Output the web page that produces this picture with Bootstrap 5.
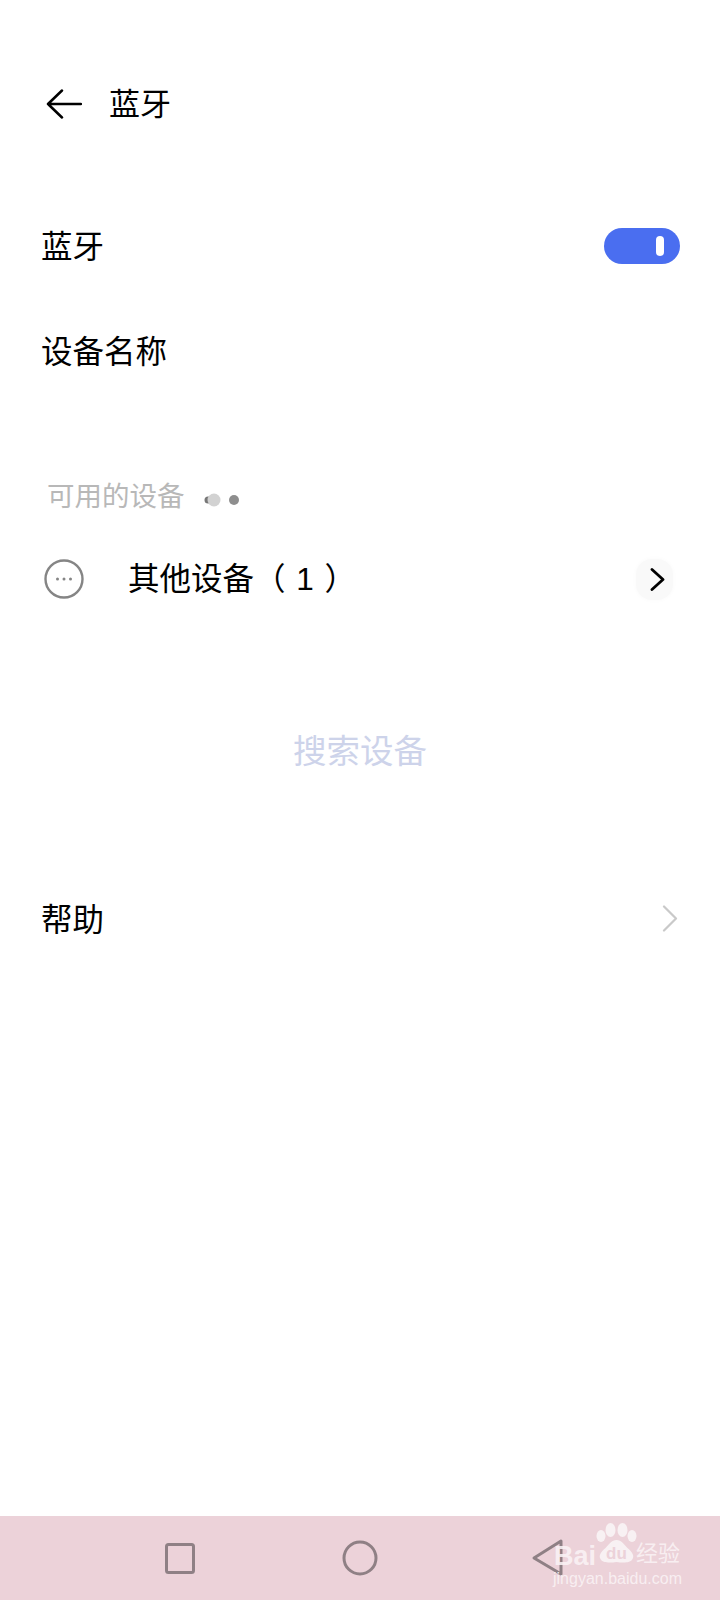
<!DOCTYPE html>
<html lang="zh-CN">
<head>
  <meta charset="UTF-8" />
  <meta name="viewport" content="width=device-width, initial-scale=1.0" />
  <title>蓝牙</title>
  <link href="https://cdn.jsdelivr.net/npm/bootstrap@5.3.0/dist/css/bootstrap.min.css" rel="stylesheet" />
  <style>
    body { font-family: "Liberation Sans", "Noto Sans CJK SC", sans-serif; color: #000; background: #fff; }
    .phone { width: 720px; height: 1600px; overflow: hidden; }
    .top-head { height: 40px; margin-top: 84px; padding-left: 46px; }
    .top-title { font-size: 31px; margin-left: 27px; line-height: 40px; padding-top: 2px; }
    .set-row { height: 105px; padding: 0 40px 0 41px; font-size: 31.5px; }
    .first-row { margin-top: 69px; }
    .txt-low { margin-top: 4px; }
    .txt-mid { margin-top: 4px; }
    .toggle-pill { width: 76px; height: 36px; border-radius: 18px; background: #4a6ef0; padding-right: 16px; }
    .toggle-knob { width: 8px; height: 20px; border-radius: 4px; background: #fff; }
    .sect-label { height: 40px; margin-top: 74px; padding-left: 47px; font-size: 27.5px; color: #b8b8b8; }
    .load-dots { margin-left: 19px; margin-top: 6px; }
    .dev-row { height: 60px; margin-top: 32px; padding: 0 47px 0 44px; font-size: 31.5px; }
    .dev-name { margin-left: 44px; margin-top: 2px; word-spacing: 2px; }
    .more-btn { width: 37px; height: 41px; border-radius: 16px; background: #f9f9f9; box-shadow: 0 0 5px #f9f9f9; padding-left: 5px; }
    .search-txt { height: 60px; margin-top: 110px; font-size: 33.5px; color: #cdd3ea; padding-top: 6px; }
    .help-row { height: 60px; margin-top: 109px; padding: 0 42px 0 41px; font-size: 31.5px; }
    .help-txt { margin-top: 6px; }
    .nav-strip { height: 84px; background: #ecd2d9; }
    .wm { left: 553px; top: 6px; width: 130px; height: 70px; color: rgba(250, 243, 245, .9); }
    .wm-bai { left: 1px; top: 21px; font: bold 27px/26px "Liberation Sans", sans-serif; }
    .wm-cn { left: 83px; top: 20px; font-size: 22px; line-height: 24px; }
    .wm-url { left: 0; top: 47px; font-size: 16px; line-height: 20px; white-space: nowrap; }
  </style>
</head>
<body>
<div class="phone d-flex flex-column">

  <!-- Header -->
  <div class="top-head d-flex align-items-center">
    <svg width="36" height="30" viewBox="0 0 36 30" fill="none" stroke="#000" stroke-width="2.5" stroke-linecap="round" stroke-linejoin="round">
      <path d="M16 1.5 2 15l14 13.5M2 15h33" />
    </svg>
    <div class="top-title">蓝牙</div>
  </div>

  <!-- Bluetooth settings -->
  <div class="set-row first-row d-flex align-items-center justify-content-between">
    <span class="txt-low">蓝牙</span>
    <div class="toggle-pill d-flex align-items-center justify-content-end">
      <div class="toggle-knob"></div>
    </div>
  </div>
  <div class="set-row d-flex align-items-center">
    <span class="txt-mid">设备名称</span>
  </div>

  <!-- Available devices -->
  <div class="sect-label d-flex align-items-center">
    <span>可用的设备</span>
    <svg class="load-dots" width="36" height="16" viewBox="0 0 36 16">
      <circle cx="4" cy="8" r="3.5" fill="#777" />
      <circle cx="10" cy="8" r="6.5" fill="#d2d2d2" />
      <circle cx="30" cy="8" r="5" fill="#8e8e8e" />
    </svg>
  </div>

  <div class="dev-row d-flex align-items-center">
    <svg width="40" height="40" viewBox="0 0 40 40" class="flex-shrink-0">
      <circle cx="20" cy="20" r="18.5" fill="none" stroke="#858585" stroke-width="2.4" />
      <circle cx="13.5" cy="20" r="1.5" fill="#858585" />
      <circle cx="20" cy="20" r="1.5" fill="#858585" />
      <circle cx="26.5" cy="20" r="1.5" fill="#858585" />
    </svg>
    <div class="dev-name flex-grow-1">其他设备（ 1 ）</div>
    <div class="more-btn d-flex align-items-center justify-content-center">
      <svg width="15" height="23" viewBox="0 0 15 23" fill="none" stroke="#000" stroke-width="2.8" stroke-linecap="round" stroke-linejoin="round">
        <path d="M2 1.5 13 11.5 2 21.5" />
      </svg>
    </div>
  </div>

  <div class="search-txt d-flex align-items-center justify-content-center">搜索设备</div>

  <div class="help-row d-flex align-items-center justify-content-between">
    <span class="help-txt">帮助</span>
    <svg width="16" height="27" viewBox="0 0 16 27" fill="none" stroke="#c9c9c9" stroke-width="2.2" stroke-linecap="round" stroke-linejoin="round">
      <path d="M2 1.5 14 13.5 2 25.5" />
    </svg>
  </div>

  <!-- System navigation -->
  <div class="nav-strip mt-auto position-relative">
    <svg width="720" height="84" viewBox="0 0 720 84" fill="none" stroke="#8f8085" stroke-width="3" stroke-linejoin="round" class="d-block">
      <rect x="166.5" y="28.5" width="27" height="28" rx="2" />
      <circle cx="360" cy="42" r="16" />
      <path d="M561 25 534 42 561 58Z" />
    </svg>
    <div class="wm position-absolute">
      <div class="wm-bai position-absolute">Bai</div>
      <svg class="position-absolute" style="left:43px;top:0" width="41" height="46" viewBox="0 0 41 46">
        <ellipse cx="5" cy="14" rx="4.5" ry="6" fill="#f8f1f3" />
        <ellipse cx="14.5" cy="8" rx="5" ry="7" fill="#f8f1f3" />
        <ellipse cx="26.5" cy="8" rx="5" ry="7" fill="#f8f1f3" />
        <ellipse cx="36" cy="14" rx="4.5" ry="6" fill="#f8f1f3" />
        <path d="M20.5 18c-5 0-7 4-11 8-5 4-7 8-5 11 2 4 9 4 16 3 7 1 14 1 16-3 2-3 0-7-5-11-4-4-6-8-11-8Z" fill="#f8f1f3" />
        <text x="20.5" y="37" text-anchor="middle" font-family="Liberation Sans" font-weight="700" font-size="17" fill="#ecd2d9">du</text>
      </svg>
      <div class="wm-cn position-absolute">经验</div>
      <div class="wm-url position-absolute">jingyan.baidu.com</div>
    </div>
  </div>
</div>
<script src="https://cdn.jsdelivr.net/npm/bootstrap@5.3.0/dist/js/bootstrap.bundle.min.js"></script>
</body>
</html>
